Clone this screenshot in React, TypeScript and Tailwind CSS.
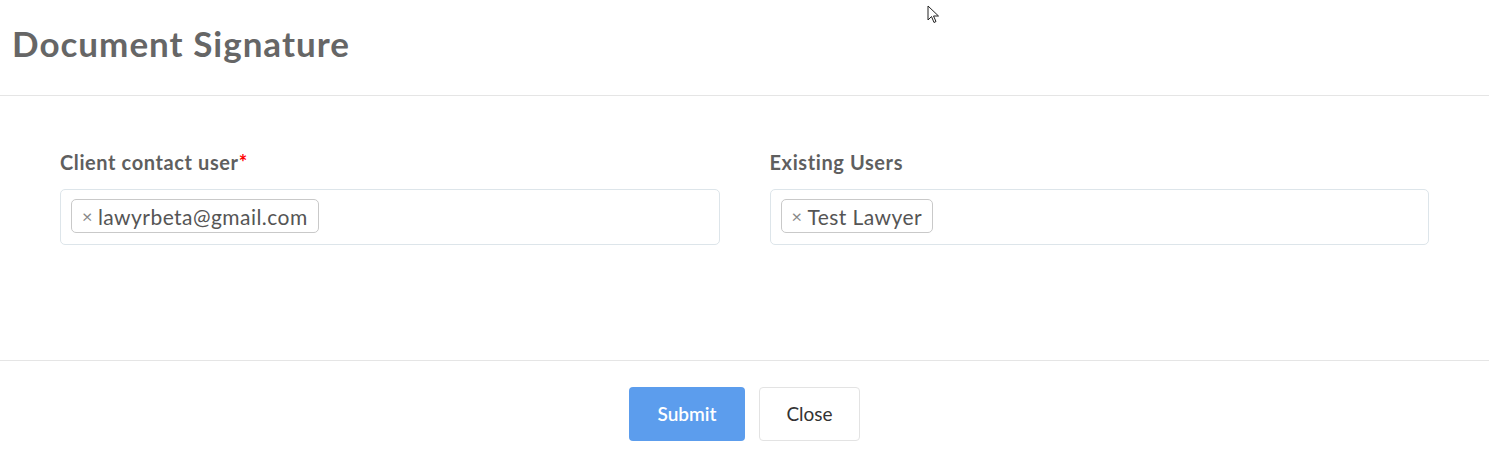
import React, { useState } from 'react';

const font = { fontFamily: 'Lato, "Open Sans", "Liberation Sans", sans-serif' };

const Chip: React.FC<{ label: string; onRemove: () => void }> = ({ label, onRemove }) => (
    <span className="inline-flex items-center h-[34px] pl-[10px] pr-[10px] rounded-[5px] border border-[#c9c9c9] text-[21px] tracking-[0.45px] text-[#555] leading-none">
        <button type="button" onClick={onRemove} className="mr-[5px] text-[18px] text-[#888] leading-none">×</button>
        {label}
    </span>
);

const App: React.FC = () => {
    const [client, setClient] = useState(['lawyrbeta@gmail.com']);
    const [users, setUsers] = useState(['Test Lawyer']);

    return (
        <div className="relative w-full h-[458px] bg-white" style={font}>
            <div className="h-[96px] border-b border-[#e5e5e5] px-[12px] pt-[17px]">
                <h1 className="text-[35px] font-bold text-[#666] tracking-[1px]">Document Signature</h1>
            </div>

            <div className="h-[265px] border-b border-[#e5e5e5] px-[60px] pt-[54px]">
                <div className="grid grid-cols-2 gap-[50px]">
                    <div>
                        <label className="block text-[20px] font-bold text-[#5f5f5f] tracking-[0.6px] mb-[15px] h-[24px] leading-[24px]">
                            Client contact user<span className="text-[#ff0000]">*</span>
                        </label>
                        <div className="h-[56px] rounded-[5px] border border-[#dde5ea] flex items-center gap-2 px-[10px] pb-[2px]">
                            {client.map(c => (
                                <Chip key={c} label={c} onRemove={() => setClient(client.filter(x => x !== c))} />
                            ))}
                        </div>
                    </div>
                    <div>
                        <label className="block text-[20px] font-bold text-[#5f5f5f] tracking-[0.6px] mb-[15px] h-[24px] leading-[24px]">Existing Users</label>
                        <div className="h-[56px] rounded-[5px] border border-[#dde5ea] flex items-center gap-2 px-[10px] pb-[2px]">
                            {users.map(u => (
                                <Chip key={u} label={u} onRemove={() => setUsers(users.filter(x => x !== u))} />
                            ))}
                        </div>
                    </div>
                </div>
            </div>

            <div className="flex justify-center gap-[14px] pt-[26px]">
                <button className="w-[116px] h-[54px] rounded-[4px] bg-[#5c9ded] text-white text-[19px] font-semibold">
                    Submit
                </button>
                <button className="w-[101px] h-[54px] rounded-[4px] border border-[#e3e3e3] bg-white text-[#333] text-[19px]">
                    Close
                </button>
            </div>

            <svg className="absolute left-[927px] top-[5px]" width="13" height="20" viewBox="0 0 13 20">
                <path d="M1 1 L1 15 L4.5 11.5 L7 17.5 L9 16.5 L6.5 11 L11.5 11 Z" fill="white" stroke="#222" strokeWidth="1" strokeLinejoin="round" />
            </svg>
        </div>
    );
};

export default App;
